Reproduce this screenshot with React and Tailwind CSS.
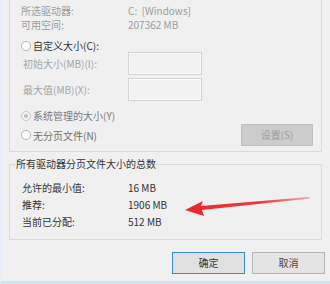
import React from "react";

function Radio({ checked, dim }) {
  return (
    <span
      className={
        "flex items-center justify-center w-[10px] h-[10px] rounded-full border shrink-0 " +
        (dim ? "border-[#c4c4c4] bg-[#f4f4f4]" : "border-[#b5b5b5] bg-white")
      }
    >
      {checked && <span className="w-[4px] h-[4px] rounded-full bg-[#bdbdbd]" />}
    </span>
  );
}

export default function App() {
  return (
    <div className="relative w-[330px] h-[284px] overflow-hidden bg-[#f0f0f0] border-l-2 border-l-[#e3eef8] border-b-[3px] border-b-[#c9e5f5] font-['Noto_Sans_CJK_SC','Noto_Sans',sans-serif] text-[10px] text-[#333]">
      <div className="pl-[7px]">
        {/* Page file settings group */}
        <div className="-mt-[10px] w-[313px] border border-[#dadada] pt-[13px] pb-[5px]">
          <div className="flex h-[14px] items-center pl-[11px] leading-[14px] text-[#9c9c9c]">
            <span className="w-[107px]">所选驱动器:</span>
            <span>C:&nbsp;&nbsp;[Windows]</span>
          </div>
          <div className="flex h-[14px] items-center pl-[11px] leading-[14px] text-[#9c9c9c]">
            <span className="w-[107px]">可用空间:</span>
            <span>207362 MB</span>
          </div>

          <div className="mt-[9px] flex h-[10px] items-center gap-[2px] pl-[11px] leading-[10px] text-[#333]">
            <Radio />
            <span>自定义大小(C):</span>
          </div>

          <div className="mt-[1px] flex h-[23px] items-center pl-[13px] text-[#a5a5a5]">
            <span className="w-[105px]">初始大小(MB)(I):</span>
            <div className="w-[74px] h-[23px] border border-[#d3d3d3] bg-[#f2f2f2] shadow-[inset_0_0_0_1px_#fafafa]" />
          </div>
          <div className="mt-[3px] flex h-[23px] items-center pl-[13px] text-[#a5a5a5]">
            <span className="w-[105px]">最大值(MB)(X):</span>
            <div className="w-[74px] h-[23px] border border-[#d3d3d3] bg-[#f2f2f2] shadow-[inset_0_0_0_1px_#fafafa]" />
          </div>

          <div className="mt-[9px] flex h-[12px] items-center gap-[2px] pl-[11px] leading-[12px] text-[#7a7a7a]">
            <Radio checked dim />
            <span>系统管理的大小(Y)</span>
          </div>

          <div className="mt-[2px] flex h-[22px] items-center justify-between pl-[11px] pr-[8px]">
            <div className="flex items-center gap-[2px] text-[#6e6e6e]">
              <Radio />
              <span>无分页文件(N)</span>
            </div>
            <button className="w-[72px] h-[22px] border border-[#bfbfbf] bg-[#cccccc] text-[#9d9d9d] leading-[20px]">
              设置(S)
            </button>
          </div>
        </div>

        {/* Totals group */}
        <fieldset className="mt-[5px] w-[313px] border border-[#dadada] pb-[9px]">
          <legend className="ml-[6px] leading-[14px] text-[#333]">所有驱动器分页文件大小的总数</legend>
          <div className="mt-[8px] flex h-[17px] items-center pl-[12px] leading-[17px]">
            <span className="w-[106px]">允许的最小值:</span>
            <span>16 MB</span>
          </div>
          <div className="flex h-[17px] items-center pl-[12px] leading-[17px]">
            <span className="w-[106px]">推荐:</span>
            <span>1906 MB</span>
          </div>
          <div className="flex h-[17px] items-center pl-[12px] leading-[17px]">
            <span className="w-[106px]">当前已分配:</span>
            <span>512 MB</span>
          </div>
        </fieldset>
      </div>

      {/* Dialog buttons */}
      <div className="mt-[12px] flex justify-end gap-[7px] pr-[5px]">
        <button className="w-[73px] h-[22px] border border-[#3b8ad6] bg-[#e1e1e1] leading-[20px] text-[#333]">
          确定
        </button>
        <button className="w-[73px] h-[22px] border border-[#b4b4b4] bg-[#e4e4e4] leading-[20px] text-[#444]">
          取消
        </button>
      </div>

      {/* Red annotation arrow */}
      <svg className="absolute left-[180px] top-[193px]" width="132" height="24" viewBox="0 0 132 24">
        <defs>
          <linearGradient id="arrowFill" x1="0" y1="0" x2="1" y2="0">
            <stop offset="0" stopColor="#e8262d" />
            <stop offset="0.6" stopColor="#ec3a40" />
            <stop offset="1" stopColor="#f7a0a6" />
          </linearGradient>
        </defs>
        <polygon
          points="3,17 21,8 19,13 127,4 128,5.5 20,17 22,23"
          fill="url(#arrowFill)"
        />
      </svg>
    </div>
  );
}
